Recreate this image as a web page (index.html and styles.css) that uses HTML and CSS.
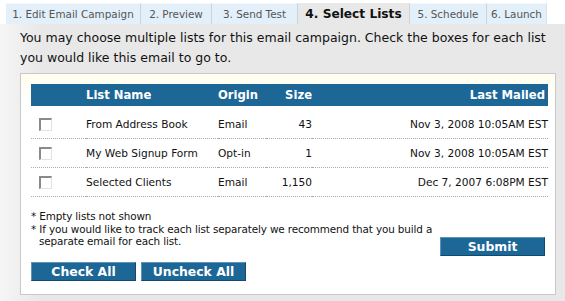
FILE: index.html
```html
<!DOCTYPE html>
<html lang="en">
<head>
  <meta charset="UTF-8">
  <title>Select Lists</title>
  <link rel="stylesheet" href="styles.css">
</head>
<body>
  <ul class="tabs">
    <li class="tab t1">1. Edit Email Campaign</li>
    <li class="tab t2">2. Preview</li>
    <li class="tab t3">3. Send Test</li>
    <li class="tab t4 active">4. Select Lists</li>
    <li class="tab t5">5. Schedule</li>
    <li class="tab t6">6. Launch</li>
  </ul>

  <div class="panel">
    <p class="intro">You may choose multiple lists for this email campaign. Check the boxes for each list you would like this email to go to.</p>

    <div class="box">
      <table class="lists">
        <thead>
          <tr>
            <th class="c-check"></th>
            <th class="c-name">List Name</th>
            <th class="c-origin">Origin</th>
            <th class="c-size">Size</th>
            <th class="c-date">Last Mailed</th>
          </tr>
        </thead>
        <tbody>
          <tr>
            <td class="c-check"><span class="checkbox"></span></td>
            <td class="c-name">From Address Book</td>
            <td class="c-origin">Email</td>
            <td class="c-size">43</td>
            <td class="c-date">Nov 3, 2008 10:05AM EST</td>
          </tr>
          <tr>
            <td class="c-check"><span class="checkbox"></span></td>
            <td class="c-name">My Web Signup Form</td>
            <td class="c-origin">Opt-in</td>
            <td class="c-size">1</td>
            <td class="c-date">Nov 3, 2008 10:05AM EST</td>
          </tr>
          <tr>
            <td class="c-check"><span class="checkbox"></span></td>
            <td class="c-name">Selected Clients</td>
            <td class="c-origin">Email</td>
            <td class="c-size">1,150</td>
            <td class="c-date">Dec 7, 2007 6:08PM EST</td>
          </tr>
        </tbody>
      </table>

      <div class="footer">
        <div class="notes">
          <p>* Empty lists not shown</p>
          <p class="indent">* If you would like to track each list separately we recommend that you build a separate email for each list.</p>
        </div>
        <button class="btn submit">Submit</button>
      </div>

      <div class="actions">
        <button class="btn">Check All</button>
        <button class="btn">Uncheck All</button>
      </div>
    </div>
  </div>
</body>
</html>
```

FILE: styles.css
```css
body {
  margin: 0;
  width: 565px;
  height: 301px;
  overflow: hidden;
  background-color: #ffffff;
  font-family: "DejaVu Sans", Verdana, sans-serif;
  color: #111111;
}

.tabs {
  display: flex;
  margin: 0;
  padding: 3px 0 0 6px;
  list-style: none;
  height: 21px;
}

.tab {
  display: flex;
  align-items: center;
  justify-content: center;
  background-color: #e3f0fa;
  border-top: 1px solid #f2f8fd;
  border-right: 1px solid #c9d4dc;
  font-size: 10.4px;
  color: #555555;
  box-sizing: border-box;
  white-space: nowrap;
}

.t1 { width: 135px; }
.t2 { width: 71px; }
.t3 { width: 86px; }
.t4 { width: 112px; }
.t5 { width: 77px; }
.t6 { width: 60px; border-right: 1px solid #d8e3ea; }

.tab.active {
  background-color: #e8e8e8;
  border-top-color: #e8e8e8;
  font-size: 12.2px;
  font-weight: bold;
  color: #111111;
}

.panel {
  background: linear-gradient(to right, #f6f6f6 0, #e8e8e8 40px, #e8e8e8 100%);
  height: 277px;
  padding: 4px 9px 0 20px;
  box-sizing: border-box;
}

.intro {
  margin: 0 0 5px;
  font-size: 12.5px;
  line-height: 20px;
  color: #111111;
}

.box {
  background: linear-gradient(to bottom, #fffdee 0, #ffffff 30px);
  border: 1px solid #c8c8c8;
  padding: 10px 7px 12px 10px;
  height: 222px;
  box-sizing: border-box;
}

.lists {
  width: 517px;
  border-collapse: collapse;
  font-size: 10.6px;
}

.lists th {
  background-color: #1d6797;
  color: #ffffff;
  font-size: 11.6px;
  font-weight: bold;
  height: 22px;
  text-align: left;
  padding: 0;
}

.lists thead tr {
  border-bottom: 4px solid #ffffff;
}

.lists td {
  height: 28px;
  padding: 0;
  border-top: 1px dotted #aaaaaa;
  border-bottom: 1px dotted #aaaaaa;
  color: #111111;
}

.c-check { width: 55px; }
.c-name { width: 132px; }
.c-origin { width: 48px; }
.c-size { width: 46px; text-align: right; }
.lists th.c-size { text-align: right; }
.c-date { text-align: right; padding-right: 3px; }
.lists th.c-date { text-align: right; padding-right: 3px; }

.checkbox {
  display: block;
  width: 13px;
  height: 13px;
  margin-left: 8px;
  border-top: 2px solid #8a8a8a;
  border-left: 2px solid #8a8a8a;
  border-right: 1px solid #e2e2e2;
  border-bottom: 1px solid #e2e2e2;
  box-sizing: border-box;
}

.footer {
  display: flex;
  justify-content: space-between;
  margin-top: 13px;
}

.notes {
  flex: none;
  font-size: 10.4px;
  letter-spacing: -0.12px;
  line-height: 12.5px;
  width: 408px;
}

.notes p {
  margin: 0;
}

.indent {
  padding-left: 8px;
  text-indent: -8px;
}

.btn {
  flex: none;
  background-color: #1d6797;
  border: 1px solid #5b93bb;
  border-bottom-color: #0f4a70;
  border-right-color: #0f4a70;
  color: #ffffff;
  font-family: "DejaVu Sans", Verdana, sans-serif;
  font-size: 12.4px;
  font-weight: bold;
  width: 105px;
  height: 19px;
  padding: 0;
  cursor: pointer;
}

.submit {
  margin-top: 27px;
  margin-right: 3px;
}

.actions {
  display: flex;
  gap: 5px;
  margin-top: 6px;
}
```
